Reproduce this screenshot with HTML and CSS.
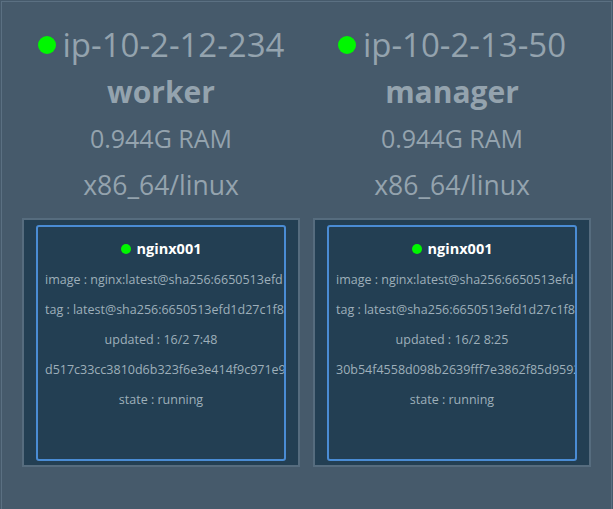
FILE: index.html
```html
<!DOCTYPE html>
<html>
<head>
<meta charset="utf-8">
<link rel="stylesheet" href="styles.css">
</head>
<body>
<div class="frame">
  <div class="columns">
    <div class="node">
      <div class="host"><span class="dot"></span>ip-10-2-12-234</div>
      <div class="role">worker</div>
      <div class="info">0.944G RAM</div>
      <div class="info arch">x86_64/linux</div>
      <div class="box">
        <div class="card">
          <div class="title"><span class="dot small"></span>nginx001</div>
          <div class="line">image : nginx:latest@sha256:6650513efd1d27c1f8a5351cbd33edf749cc7e0d5b0e7a25f7ec46f73ff6e16e</div>
          <div class="line">tag : latest@sha256:6650513efd1d27c1f8a5351cbd33edf749cc7e0d5b0e7a25f7ec46f73ff6e16e</div>
          <div class="line">updated : 16/2 7:48</div>
          <div class="line">d517c33cc3810d6b323f6e3e414f9c971e9a8c2b1d4e5f60718293a4b5c6d7e8</div>
          <div class="line">state : running</div>
        </div>
      </div>
    </div>
    <div class="node">
      <div class="host"><span class="dot"></span>ip-10-2-13-50</div>
      <div class="role">manager</div>
      <div class="info">0.944G RAM</div>
      <div class="info arch">x86_64/linux</div>
      <div class="box">
        <div class="card">
          <div class="title"><span class="dot small"></span>nginx001</div>
          <div class="line">image : nginx:latest@sha256:6650513efd1d27c1f8a5351cbd33edf749cc7e0d5b0e7a25f7ec46f73ff6e16e</div>
          <div class="line">tag : latest@sha256:6650513efd1d27c1f8a5351cbd33edf749cc7e0d5b0e7a25f7ec46f73ff6e16e</div>
          <div class="line">updated : 16/2 8:25</div>
          <div class="line">30b54f4558d098b2639fff7e3862f85d9592a1b2c3d4e5f60718293a4b5c6d7e</div>
          <div class="line">state : running</div>
        </div>
      </div>
    </div>
  </div>
</div>
</body>
</html>
```
FILE: styles.css
```css
html, body {
  margin: 0;
  padding: 0;
  background: #465a6b;
  overflow: hidden;
}
body {
  font-family: "Open Sans", "DejaVu Sans", sans-serif;
  width: 613px;
  height: 509px;
}
.frame {
  margin: 1px 0 0 1px;
  width: 609px;
  height: 520px;
  border: 1px solid #5b7082;
  box-sizing: content-box;
}
.columns {
  display: flex;
  gap: 13px;
  padding-left: 20px;
  padding-top: 19px;
}
.node {
  width: 278px;
  display: flex;
  flex-direction: column;
  align-items: center;
  color: #94a3ae;
}
.host {
  font-size: 33px;
  line-height: 48px;
  display: flex;
  align-items: center;
  white-space: nowrap;
}
.dot {
  display: inline-block;
  width: 18px;
  height: 18px;
  border-radius: 50%;
  background: #00f700;
  margin-right: 7px;
}
.role {
  font-size: 30px;
  font-weight: 700;
  line-height: 46px;
}
.info {
  font-size: 25px;
  line-height: 47px;
}
.info.arch {
  font-size: 26.5px;
}
.box {
  margin-top: 9px;
  width: 278px;
  height: 249px;
  box-sizing: border-box;
  border: 2px solid #566c7e;
  background: #233f53;
  padding: 5px 12px 0 12px;
}
.card {
  width: 250px;
  height: 236px;
  box-sizing: border-box;
  border: 2px solid #4a8cd4;
  border-radius: 3px;
  overflow: hidden;
  padding: 6px 7px 0 7px;
  text-align: center;
}
.title {
  color: #ffffff;
  font-weight: 700;
  font-size: 14.5px;
  line-height: 32px;
  display: flex;
  justify-content: center;
  align-items: center;
}
.dot.small {
  width: 10px;
  height: 10px;
  margin-right: 6px;
}
.line {
  color: #9eafba;
  font-size: 12.5px;
  line-height: 30px;
  white-space: nowrap;
}
```
